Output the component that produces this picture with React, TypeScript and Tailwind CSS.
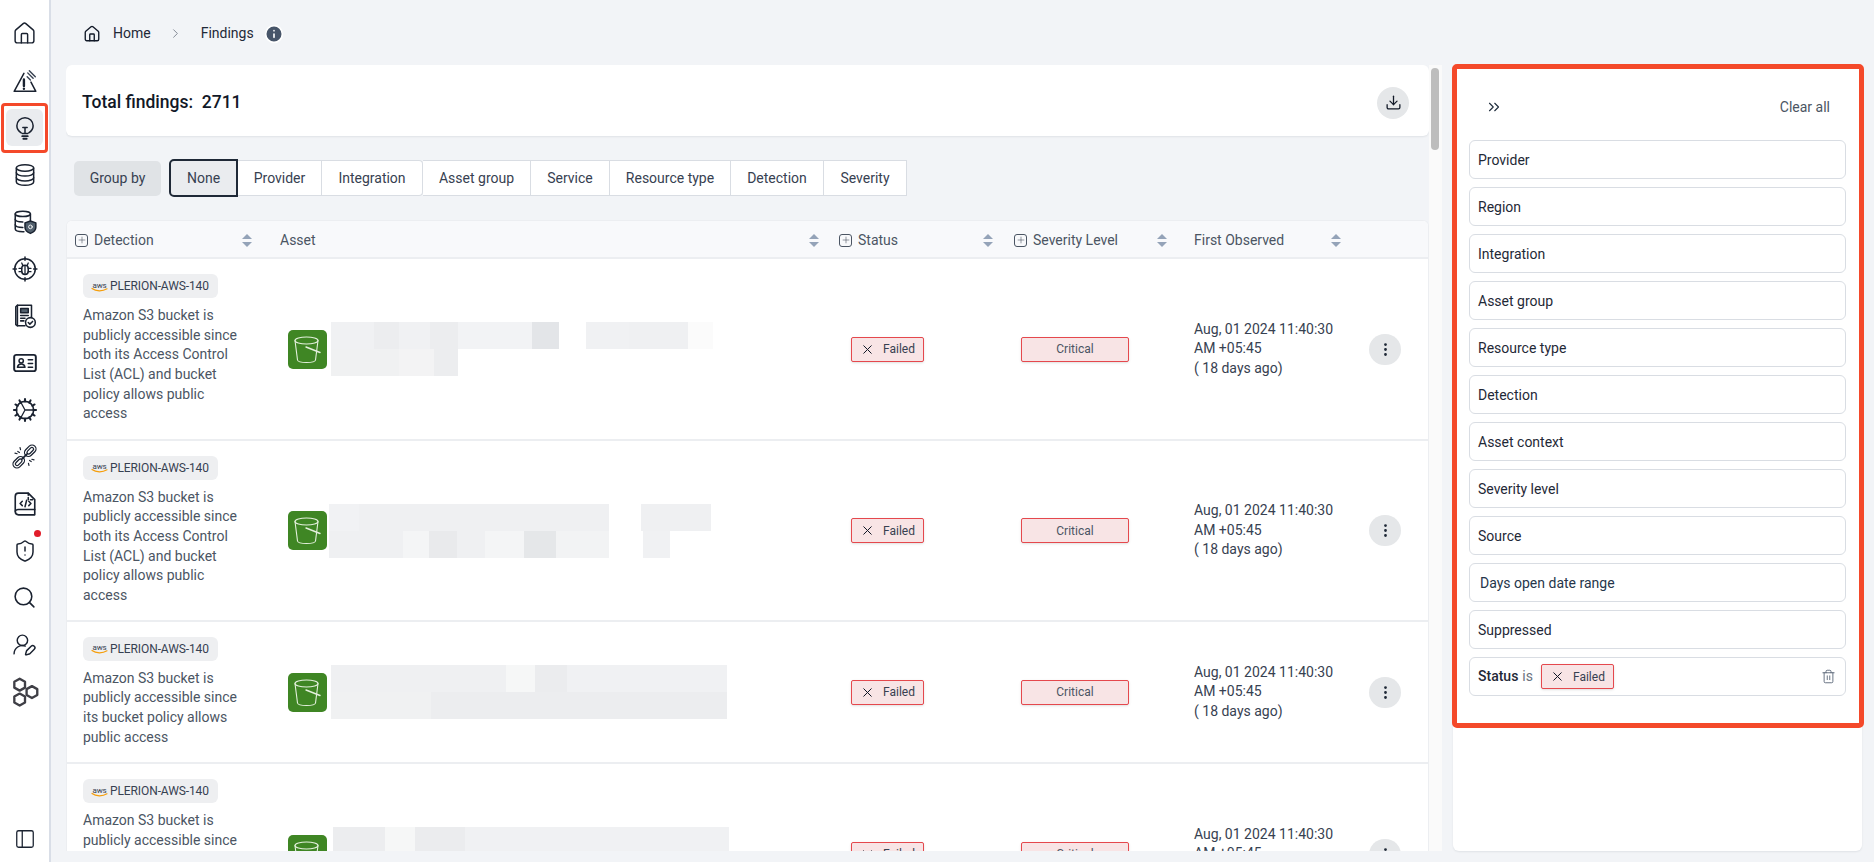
import {
  ChevronRight,
  ChevronsRight,
  Download,
  EllipsisVertical,
  House,
  Info,
  PanelLeft,
  Plus,
  Search,
  ShieldAlert,
  Trash2,
  UserRoundPen,
  X,
} from "lucide-react";
import { ReactNode } from "react";

const font = "font-['Roboto','Liberation_Sans',sans-serif]";
const ink = "#1a2230";

const Stroke = ({ children, size = 26 }: { children: ReactNode; size?: number }) => (
  <svg
    width={size}
    height={size}
    viewBox="0 0 24 24"
    fill="none"
    stroke={ink}
    strokeWidth={1.4}
    strokeLinecap="round"
    strokeLinejoin="round"
  >
    {children}
  </svg>
);

const WarnIcon = () => (
  <Stroke>
    <path d="M11 5 2 21.500h20L17.500 13" />
    <path d="M11 10.500v6M11 19v.2" strokeWidth={2.2} />
    <path d="M14.500 4.500l5 5M16 2.500l5.500 5.500M14 8l3 3" strokeWidth={1.3} stroke="#374151" />
  </Stroke>
);

const BulbIcon = () => (
  <Stroke>
    <path d="M8.500 16.500C6 15 4.500 12.800 4.500 10a7.500 7.500 0 0 1 15 0c0 2.800-1.500 5-4 6.500" />
    <path d="M9.500 17h5M12 17v-5M10 11.500h4" />
    <path d="M9.500 19.500h5M10.500 22h3" strokeWidth={1.8} />
  </Stroke>
);

const DbIcon = () => (
  <Stroke>
    <ellipse cx="12" cy="5.500" rx="8" ry="3" />
    <path d="M4 5.500v13c0 1.700 3.600 3 8 3s8-1.300 8-3v-13" />
    <path d="M4 10c0 1.700 3.600 3 8 3s8-1.300 8-3M4 14.500c0 1.700 3.600 3 8 3s8-1.300 8-3" />
  </Stroke>
);

const DbShieldIcon = () => (
  <Stroke>
    <ellipse cx="10" cy="4.500" rx="7" ry="2.500" />
    <path d="M3 4.500v14c0 1.400 3 2.500 7 2.500h1M17 4.500v6" />
    <path d="M3 9.500c0 1.400 3 2.500 7 2.500M3 14.500c0 1.400 3 2.500 7 2.500" />
    <path d="M17 11l5 1.800v4c0 3-2.400 4.700-5 5.700-2.600-1-5-2.700-5-5.700v-4z" fill="#52606d" />
    <circle cx="17" cy="16.500" r="1.700" stroke="#ffffff" strokeWidth={0.8} />
  </Stroke>
);

const BugIcon = () => (
  <Stroke>
    <circle cx="12" cy="12" r="9.500" />
    <path d="M12 1v3M12 20v3M1 12h3M20 12h3" />
    <rect x="9" y="8.500" width="6" height="8.500" rx="3" />
    <path d="M12 9v8M9 11.500H6.500M15 11.500h2.500M9 14.500H6.500M15 14.500h2.500M10 8.800 9 6.500M14 8.800l1-2.300" strokeWidth={1.2} />
  </Stroke>
);

const ReportIcon = () => (
  <Stroke>
    <path d="M5 2h13v12M5 2v19h7" />
    <path d="M5 2 3.500 3.500V20L5 21" />
    <rect x="8" y="5" width="7" height="4" fill="#52606d" />
    <path d="M8 11.500h7M8 14h4M8 16.500h3" />
    <circle cx="17" cy="18" r="4.500" fill="#ffffff" />
    <path d="m15 18 1.500 1.500 2.500-2.500" />
  </Stroke>
);

const IdIcon = () => (
  <Stroke>
    <rect x="2" y="4.500" width="20" height="15" rx="2" strokeWidth={1.8} />
    <circle cx="8.500" cy="10" r="2" />
    <path d="M5 16c.3-2 1.800-3 3.500-3s3.200 1 3.500 3z" />
    <path d="M15 9h4M15 12.500h4M15 16h4" />
  </Stroke>
);

const gearTeeth = Array.from({ length: 12 }, (_, i) => i * 30);

const GearIcon = () => (
  <Stroke>
    <circle cx="12" cy="12" r="8" strokeWidth={1.5} />
    {gearTeeth.map((deg) => (
      <path key={deg} d="M12 1.800v2.400" strokeWidth={1.9} transform={`rotate(${deg} 12 12)`} />
    ))}
    <path d="M12 12 8.500 5.500M12 12h8M12 12l-3.500 6.500" strokeWidth={1.2} />
  </Stroke>
);

const ChainIcon = () => (
  <Stroke size={27}>
    <g transform="rotate(-45 12 12)" strokeWidth={1.1}>
      <rect x="-1" y="8.500" width="11.500" height="7" rx="3.500" />
      <rect x="13.500" y="8.500" width="11.500" height="7" rx="3.500" />
      <rect x="1.200" y="10.500" width="7" height="3" rx="1.500" />
      <rect x="15.800" y="10.500" width="7" height="3" rx="1.500" />
      <path d="M9 12h6" strokeWidth={1.6} />
    </g>
    <path d="M6 7.500l1.500 1M8 4l.5 2M3.500 9 5.500 9.500M18 16.500l-1.500-1M16 20l-.5-2M20.500 15l-2-.5" strokeWidth={1} />
  </Stroke>
);

const CodeDocIcon = () => (
  <Stroke>
    <path d="M6 2h9l6 6v14H6a3 3 0 0 1-3-3V5a3 3 0 0 1 3-3z" strokeWidth={1.5} />
    <path d="M15 2v6h6" strokeDasharray="2 2" />
    <path d="M3 18.500c.5-1 1.500-1.500 3-1.500h15" />
    <path d="m9.500 9.500-2 2 2 2M15.500 9.500l2 2-2 2M13.500 8.500l-1.500 6" />
  </Stroke>
);

const HexIcon = () => (
  <svg width="32" height="32" viewBox="0 0 30 30" fill="none" stroke="#3f3f46" strokeWidth={2.2} strokeLinejoin="round">
    <path d="M10 2.500l5 2.800v5.600l-5 2.800-5-2.800V5.300z" />
    <path d="M21.500 9.500l5 2.800v5.600l-5 2.800-5-2.800v-5.600z" />
    <path d="M10 16.500l5 2.800v5.600l-5 2.800-5-2.800v-5.600z" />
  </svg>
);

const AwsLogo = () => (
  <svg width="17" height="11" viewBox="0 0 17 11" className="shrink-0">
    <text x="8.500" y="6.500" textAnchor="middle" fontSize="8" fontFamily="Roboto, sans-serif" fill="#374151">
      aws
    </text>
    <path d="M1 7.500c4 3 10.500 3 15 .3" fill="none" stroke="#f59e0b" strokeWidth="1.200" strokeLinecap="round" />
  </svg>
);

const BucketIcon = () => (
  <div className="h-[39px] w-[39px] shrink-0 rounded-[5px] bg-[#3f8624]">
    <svg width="39" height="39" viewBox="0 0 39 39" fill="none" stroke="#e4f0dd" strokeWidth={1.1} strokeLinecap="round">
      <ellipse cx="18.500" cy="10.500" rx="11.500" ry="3.500" />
      <path d="M7 10.500 9.500 30c.3 1.500 4 2.500 9 2.500s8.700-1 9-2.500L30 10.500" />
      <path d="M18 17l14 5.500" strokeWidth={1.4} />
    </svg>
  </div>
);

const SortArrows = () => (
  <div className="flex flex-col items-center gap-[3px]">
    <span className="h-0 w-0 border-x-[5px] border-b-[5px] border-x-transparent border-b-[#94a3b8]" />
    <span className="h-0 w-0 border-x-[5px] border-t-[5px] border-x-transparent border-t-[#94a3b8]" />
  </div>
);

const PlusBox = () => (
  <span className="flex h-[13px] w-[13px] shrink-0 items-center justify-center rounded-[3px] border border-[#4b5563]">
    <Plus size={10} strokeWidth={1.4} className="text-[#4b5563]" />
  </span>
);

const FailedBadge = () => (
  <span className="flex h-[25px] w-[73px] shrink-0 items-center gap-[8px] rounded-[2px] border border-[#e5484d] bg-[#f8e4e5] pl-[8px] text-[12px] text-[#374151] shadow-sm">
    <X size={15} strokeWidth={1.6} className="text-[#111827]" />
    Failed
  </span>
);

const navItems = [
  <House size={25} strokeWidth={1.4} color={ink} />,
  <WarnIcon />,
  <BulbIcon />,
  <DbIcon />,
  <DbShieldIcon />,
  <BugIcon />,
  <ReportIcon />,
  <IdIcon />,
  <GearIcon />,
  <ChainIcon />,
  <CodeDocIcon />,
  <ShieldAlert size={24} strokeWidth={1.5} color={ink} />,
  <Search size={25} strokeWidth={1.5} color={ink} />,
  <UserRoundPen size={25} strokeWidth={1.4} color={ink} />,
  <HexIcon />,
];

const groups = [
  ["Provider", 84],
  ["Integration", 101],
  ["Asset group", 108],
  ["Service", 79],
  ["Resource type", 121],
  ["Detection", 93],
  ["Severity", 83],
] as const;

const filters = [
  "Provider",
  "Region",
  "Integration",
  "Asset group",
  "Resource type",
  "Detection",
  "Asset context",
  "Severity level",
  "Source",
];

type Block = { w: number; shade: string };

type Row = {
  height: string;
  text: string;
  lines: Block[][];
  inset: string;
};

const aclText =
  "Amazon S3 bucket is publicly accessible since both its Access Control List (ACL) and bucket policy allows public access";

const rows: Row[] = [
  {
    height: "h-[182px]",
    text: aclText,
    inset: "pl-[4px]",
    lines: [
      [
        { w: 43, shade: "bg-[#f0f1f3]" },
        { w: 25, shade: "bg-[#ecedef]" },
        { w: 31, shade: "bg-[#f0f1f3]" },
        { w: 28, shade: "bg-[#ecedef]" },
        { w: 74, shade: "bg-[#f2f3f5]" },
        { w: 27, shade: "bg-[#e3e5e8]" },
        { w: 27, shade: "bg-white" },
        { w: 43, shade: "bg-[#f0f1f3]" },
        { w: 59, shade: "bg-[#eff0f2]" },
        { w: 25, shade: "bg-[#fbfbfb]" },
      ],
      [
        { w: 68, shade: "bg-[#f0f1f2]" },
        { w: 35, shade: "bg-[#f3f3f4]" },
        { w: 24, shade: "bg-[#ecedef]" },
      ],
    ],
  },
  {
    height: "h-[181px]",
    text: aclText,
    inset: "pl-[2px]",
    lines: [
      [
        { w: 30, shade: "bg-[#f1f2f4]" },
        { w: 250, shade: "bg-[#eff0f2]" },
        { w: 32, shade: "bg-white" },
        { w: 70, shade: "bg-[#eff0f2]" },
      ],
      [
        { w: 74, shade: "bg-[#eff0f2]" },
        { w: 26, shade: "bg-[#f4f5f6]" },
        { w: 28, shade: "bg-[#e9eaec]" },
        { w: 28, shade: "bg-[#eff0f2]" },
        { w: 39, shade: "bg-[#f4f5f6]" },
        { w: 32, shade: "bg-[#e5e7e9]" },
        { w: 53, shade: "bg-[#f2f3f4]" },
        { w: 34, shade: "bg-white" },
        { w: 27, shade: "bg-[#f0f1f3]" },
      ],
    ],
  },
  {
    height: "h-[142px]",
    text: "Amazon S3 bucket is publicly accessible since its bucket policy allows public access",
    inset: "pl-[4px]",
    lines: [
      [
        { w: 175, shade: "bg-[#eff0f2]" },
        { w: 29, shade: "bg-[#f6f7f7]" },
        { w: 32, shade: "bg-[#ebecee]" },
        { w: 160, shade: "bg-[#f0f1f3]" },
      ],
      [
        { w: 100, shade: "bg-[#f0f1f2]" },
        { w: 296, shade: "bg-[#ecedef]" },
      ],
    ],
  },
  {
    height: "h-[182px]",
    text: aclText,
    inset: "pl-[6px]",
    lines: [
      [
        { w: 52, shade: "bg-[#ecedef]" },
        { w: 30, shade: "bg-[#f6f7f7]" },
        { w: 50, shade: "bg-[#ebecee]" },
        { w: 264, shade: "bg-[#f0f1f3]" },
      ],
      [{ w: 396, shade: "bg-[#eff0f2]" }],
    ],
  },
];

const FindingRow = ({ row }: { row: Row }) => (
  <div className={`flex shrink-0 items-center border-b-2 border-[#eceef1] ${row.height}`}>
    <div className="w-[221px] shrink-0 pl-[16px] pr-[50px]">
      <div className="flex h-[24px] w-[135px] items-center gap-[2px] rounded-[6px] bg-[#eeeff1] pl-[8px] text-[12px] tracking-[-0.1px] text-[#374151]">
        <AwsLogo />
        PLERION-AWS-140
      </div>
      <p className="mt-[8px] text-[14px] leading-[19.6px] text-[#4b5563]">{row.text}</p>
    </div>
    <div className="flex w-[563px] shrink-0 items-center">
      <BucketIcon />
      <div className={`flex flex-col ${row.inset}`}>
        {row.lines.map((line, i) => (
          <div key={i} className="flex h-[27px]">
            {line.map((b, j) => (
              <span key={j} className={b.shade} style={{ width: b.w }} />
            ))}
          </div>
        ))}
      </div>
    </div>
    <div className="w-[170px] shrink-0">
      <FailedBadge />
    </div>
    <div className="w-[173px] shrink-0">
      <div className="flex h-[25px] w-[108px] items-center justify-center rounded-[2px] border border-[#e5484d] bg-[#f8e4e5] text-[12px] text-[#4b5563] shadow-sm">
        Critical
      </div>
    </div>
    <div className="w-[175px] shrink-0 text-[14px] leading-[19.6px] text-[#374151]">
      <p className="w-[140px]">Aug, 01 2024 11:40:30 AM +05:45</p>
      <p>( 18 days ago)</p>
    </div>
    <div className="flex h-[31px] w-[32px] shrink-0 items-center justify-center rounded-full bg-[#e5e7e9]">
      <EllipsisVertical size={17} strokeWidth={2} className="text-[#1f2937]" />
    </div>
  </div>
);

const HeaderCell = ({
  label,
  plus,
  width,
  sortWidth,
}: {
  label: string;
  plus?: boolean;
  width: string;
  sortWidth: string;
}) => (
  <div className={`flex shrink-0 items-center ${width}`}>
    <div className={`flex items-center gap-[6px] ${sortWidth}`}>
      {plus && <PlusBox />}
      <span>{label}</span>
    </div>
    <SortArrows />
  </div>
);

export default function App() {
  return (
    <div className={`relative flex h-[862px] w-[1874px] overflow-hidden bg-[#f2f4f7] ${font}`}>
      <aside className="flex h-full w-[51px] shrink-0 flex-col items-center border-r-2 border-[#d9dee7] bg-white pt-[10px]">
        {navItems.map((icon, i) => (
          <div key={i} className="relative flex h-[47px] w-[37px] shrink-0 items-center justify-center">
            <div
              className={`flex h-[37px] w-[37px] items-center justify-center ${
                i === 2 ? "rounded-[6px] bg-[#eaecef]" : ""
              }`}
            >
              {icon}
            </div>
            {i === 11 && (
              <span className="absolute right-[2px] top-[3px] h-[7px] w-[7px] rounded-full bg-[#e11d2a]" />
            )}
          </div>
        ))}
        <div className="mt-auto mb-[12px]">
          <PanelLeft size={22} strokeWidth={1.4} color={ink} />
        </div>
      </aside>

      <main className="flex min-w-0 flex-1 flex-col pb-[11px]">
        <div className="flex h-[65px] shrink-0 items-center pl-[32px] pt-[2px] text-[14px] text-[#1f2937]">
          <House size={18} strokeWidth={1.8} color="#111827" />
          <span className="ml-[12px]">Home</span>
          <ChevronRight size={15} strokeWidth={1.3} className="ml-[17px] text-[#6b7280]" />
          <span className="ml-[18px]">Findings</span>
          <Info size={20} fill="#475569" stroke="#ffffff" strokeWidth={2} className="ml-[10px]" />
        </div>

        <div className="flex min-h-0 flex-1">
          <div className="ml-[15px] flex w-[1363px] min-w-0 shrink-0 flex-col overflow-hidden">
            <section className="flex h-[71px] shrink-0 items-center justify-between rounded-[6px] bg-white pl-[16px] pr-[20px] pt-[4px] shadow-[0_1px_2px_rgba(15,23,42,0.08)]">
              <h1 className="text-[17.5px] font-medium text-[#111827]">
                Total findings:&nbsp; 2711
              </h1>
              <div className="flex h-[32px] w-[32px] items-center justify-center rounded-full bg-[#e5e7e9]">
                <Download size={17} strokeWidth={1.8} className="text-[#111827]" />
              </div>
            </section>

            <div className="ml-[8px] mt-[23px] flex h-[38px] shrink-0 items-center text-[14px] text-[#374151]">
              <div className="flex h-[35px] w-[87px] items-center justify-center rounded-[5px] bg-[#e0e3e6] pt-[1px]">
                Group by
              </div>
              <div className="ml-[8px] flex h-[38px] w-[69px] items-center justify-center rounded-l-[5px] border-2 border-[#1f2937] bg-[#eaecef] pt-[1px]">
                None
              </div>
              {groups.map(([name, width], i) => (
                <div
                  key={name}
                  className={`flex h-[36px] items-center justify-center border border-l-0 border-[#d9dde3] bg-white pt-[1px] ${
                    i === 1 ? "rounded-r-[4px]" : ""
                  }`}
                  style={{ width }}
                >
                  {name}
                </div>
              ))}
            </div>

            <section className="mt-[23px] flex min-h-0 flex-1 flex-col overflow-hidden rounded-t-[6px] border-x border-t border-[#eceef1] bg-white">
              <div className="flex h-[38px] shrink-0 items-center border-b-2 border-[#eceef1] bg-[#f8f9fb] pl-[8px] pt-[2px] text-[14px] text-[#4b5563]">
                <HeaderCell label="Detection" plus width="w-[205px]" sortWidth="w-[167px]" />
                <div className="flex w-[559px] shrink-0 items-center">
                  <span className="w-[529px]">Asset</span>
                  <SortArrows />
                </div>
                <HeaderCell label="Status" plus width="w-[175px]" sortWidth="w-[144px]" />
                <HeaderCell label="Severity Level" plus width="w-[180px]" sortWidth="w-[143px]" />
                <HeaderCell label="First Observed" width="w-[160px]" sortWidth="w-[137px]" />
              </div>
              {rows.map((row, i) => (
                <FindingRow key={i} row={row} />
              ))}
            </section>
          </div>

          <div className="w-[13px] shrink-0 bg-[#fafafa] pl-[2px] pt-[3px]">
            <div className="h-[82px] w-[8px] rounded-full bg-[#bdbdbd]" />
          </div>

          <aside className="ml-[11px] flex w-[409px] shrink-0 flex-col rounded-[6px] bg-white px-[16px] shadow-[0_1px_2px_rgba(15,23,42,0.08)]">
            <div className="flex h-[75px] shrink-0 items-center justify-between pl-[16px] pr-[16px] pt-[9px]">
              <ChevronsRight size={18} strokeWidth={1.5} className="text-[#1f2d3d]" />
              <button className="text-[14px] text-[#4b5563]">Clear all</button>
            </div>
            <div className="flex flex-col gap-[8px]">
              {filters.map((f) => (
                <div
                  key={f}
                  className="flex h-[39px] items-center rounded-[6px] border border-[#d9dde3] pl-[8px] pt-[1px] text-[14px] text-[#1f2937]"
                >
                  {f}
                </div>
              ))}
              <div className="flex h-[39px] items-center rounded-[6px] border border-[#d9dde3] pl-[10px] pt-[1px] text-[14px] text-[#26364a]">
                Days open date range
              </div>
              <div className="flex h-[39px] items-center rounded-[6px] border border-[#d9dde3] pl-[8px] pt-[1px] text-[14px] text-[#1f2937]">
                Suppressed
              </div>
              <div className="flex h-[39px] items-center rounded-[6px] border border-[#d9dde3] pl-[8px] pr-[9px] text-[14px]">
                <span className="font-medium text-[#1f2937]">Status</span>
                <span className="ml-[4px] text-[#6b7280]">is</span>
                <div className="ml-[8px]">
                  <FailedBadge />
                </div>
                <Trash2 size={15} strokeWidth={1.3} className="ml-auto text-[#475569]" />
              </div>
            </div>
          </aside>
        </div>
      </main>

      <div className="pointer-events-none absolute left-[1px] top-[103px] h-[50px] w-[47px] rounded-[4px] border-[3px] border-[#f4492a]" />
      <div className="pointer-events-none absolute left-[1452px] top-[64px] h-[664px] w-[412px] rounded-[5px] border-[5px] border-[#f4492a]" />
    </div>
  );
}
